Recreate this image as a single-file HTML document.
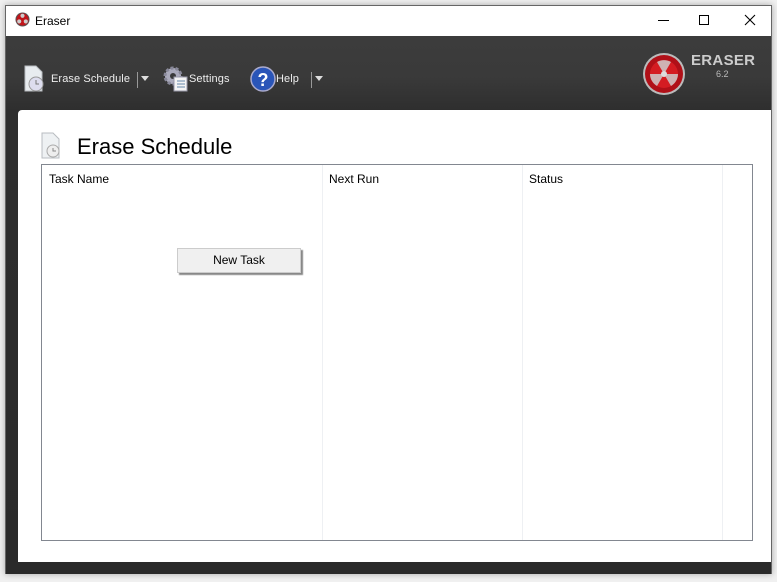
<!DOCTYPE html>
<html><head><style>
*{margin:0;padding:0;box-sizing:border-box}
body{width:777px;height:582px;background:#f0f0f0;position:relative;overflow:hidden;font-family:"Liberation Sans",sans-serif}
.win{position:absolute;left:5px;top:5px;width:767px;height:569px;background:#2f2f2f;border:1px solid #666;box-shadow:0 0 6px rgba(0,0,0,.3)}
.title{position:absolute;left:0;top:0;width:765px;height:30px;background:#fff;font-size:12px;color:#000}
.dark{position:absolute;left:0;top:30px;width:765px;height:538px;background:linear-gradient(180deg,#3c3c3c 0,#3a3a3a 40px,#2e2e2e 75px,#2a2a2a 100%)}
.t{position:absolute;color:#eee;font-size:11px;letter-spacing:0.1px}
.panel{position:absolute;left:12px;top:104px;width:753px;height:452px;background:#fff;border-radius:4px 0 0 0}
.lv{position:absolute;left:35px;top:158px;width:712px;height:377px;border:1px solid #828790;background:#fff}
.col{position:absolute;top:0;bottom:0;width:1px;background:#eef0f3}
.h{position:absolute;top:7px;font-size:12px;color:#000}
</style></head><body>
<div class="win">
<div class="title">
 <svg style="position:absolute;left:9px;top:6px" width="15" height="15" viewBox="0 0 16 16"><circle cx="8" cy="8" r="7.5" fill="#555"/><circle cx="8" cy="8" r="6.5" fill="#c0141a"/><circle cx="8" cy="4" r="2.2" fill="#ccc"/><circle cx="4.5" cy="10" r="2.2" fill="#ccc"/><circle cx="11.5" cy="10" r="2.2" fill="#ccc"/></svg>
 <span style="position:absolute;left:29px;top:8px">Eraser</span>
 <div style="position:absolute;left:652px;top:14px;width:11px;height:1px;background:#000"></div>
 <div style="position:absolute;left:693px;top:9px;width:10px;height:10px;border:1px solid #000"></div>
 <svg style="position:absolute;left:738px;top:8px" width="12" height="12"><path d="M1 1L11 11M11 1L1 11" stroke="#000" stroke-width="1.1"/></svg>
</div>
<div class="dark"></div>
<svg style="position:absolute;left:17px;top:59px" width="26" height="28" viewBox="0 0 26 28"><path d="M2 1h11l6 6v19H2z" fill="#e8ecef" stroke="#b8bcc0"/><circle cx="13" cy="19" r="7" fill="#dde" stroke="#999"/><path d="M13 15v4h3" stroke="#777" fill="none"/></svg>
<span class="t" style="left:45px;top:67px">Erase Schedule</span>
<div style="position:absolute;left:131px;top:66px;width:1px;height:16px;background:#999"></div>
<svg style="position:absolute;left:135px;top:70px" width="9" height="6"><path d="M0 0h8L4 5z" fill="#ddd"/></svg>
<svg style="position:absolute;left:157px;top:59px" width="28" height="28" viewBox="0 0 28 28"><circle cx="10" cy="11" r="8" fill="#aab" stroke="#889" stroke-dasharray="3 2" stroke-width="3"/><circle cx="10" cy="11" r="3" fill="#3a3a3a"/><rect x="11" y="12" width="13" height="14" fill="#f4f4f4" stroke="#99a"/><path d="M14 16h8M14 19h8M14 22h8" stroke="#68a"/></svg>
<span class="t" style="left:183px;top:67px">Settings</span>
<svg style="position:absolute;left:244px;top:60px" width="26" height="26"><circle cx="13" cy="13" r="12" fill="#2a55b8" stroke="#aac" stroke-width="1.5"/><text x="13" y="20" font-family="Liberation Sans" font-weight="bold" font-size="18" fill="#fff" text-anchor="middle">?</text></svg>
<span class="t" style="left:270px;top:67px">Help</span>
<div style="position:absolute;left:305px;top:66px;width:1px;height:16px;background:#999"></div>
<svg style="position:absolute;left:309px;top:70px" width="9" height="6"><path d="M0 0h8L4 5z" fill="#ddd"/></svg>
<svg style="position:absolute;left:636px;top:46px" width="44" height="44" viewBox="0 0 44 44"><circle cx="22" cy="22" r="21" fill="#bbb"/><circle cx="22" cy="22" r="19" fill="#b01018"/><circle cx="22" cy="22" r="14" fill="#d41c22"/><path d="M22 22L15 10A14 14 0 0 1 29 10Z M22 22L36 22A14 14 0 0 1 29 34Z M22 22L15 34A14 14 0 0 1 8 22Z" fill="#ccc" opacity=".85"/><circle cx="22" cy="22" r="3" fill="#ddd"/></svg>
<span style="position:absolute;left:685px;top:46px;color:#ccc;font-weight:bold;font-size:15px;letter-spacing:0.3px">ERASER</span>
<span style="position:absolute;left:710px;top:63px;color:#bbb;font-size:9px">6.2</span>
<div class="panel"></div>
<svg style="position:absolute;left:34px;top:126px" width="26" height="28" viewBox="0 0 26 28"><path d="M2 1h11l6 6v19H2z" fill="#eef1f3" stroke="#b8bcc0"/><circle cx="13" cy="19" r="6" fill="#eee" stroke="#aaa"/><path d="M13 16v3h3" stroke="#888" fill="none"/></svg>
<span style="position:absolute;left:71px;top:128px;font-size:22px;color:#000">Erase Schedule</span>
<div class="lv">
 <div class="col" style="left:280px"></div><div class="col" style="left:480px"></div><div class="col" style="left:680px"></div>
 <span class="h" style="left:7px">Task Name</span>
 <span class="h" style="left:287px">Next Run</span>
 <span class="h" style="left:487px">Status</span>
 <div style="position:absolute;left:135px;top:83px;width:124px;height:25px;background:#f0f0f0;border:1px solid #ccc;box-shadow:2px 2px 1px #888;font-size:12px;text-align:center;line-height:23px">New Task</div>
</div>
</div>
</body></html>
